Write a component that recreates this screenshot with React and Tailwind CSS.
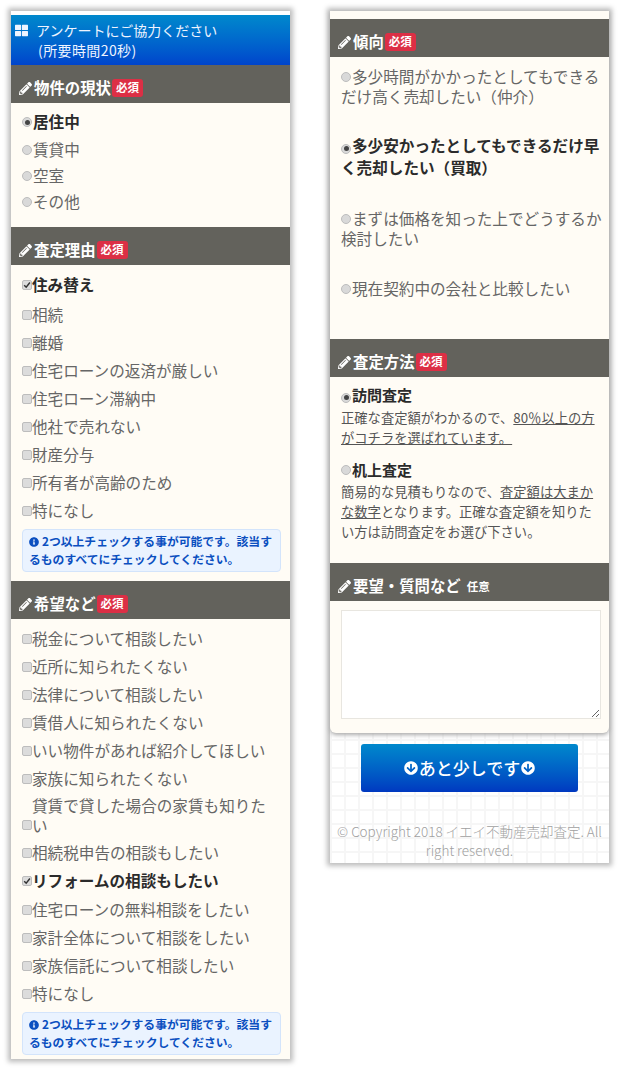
import { FaPencilAlt, FaInfoCircle, FaArrowCircleDown, FaThLarge } from 'react-icons/fa';

const Head = ({ title, badge = true }) => (
    <div className="h-[38px] bg-[#63625c] flex items-center pl-[8px] pt-[8px] text-white">
        <FaPencilAlt className="w-[13px] h-[13px] mr-[2px] shrink-0" />
        <span className="text-[15.4px] font-bold leading-none">{title}</span>
        {badge
            ? <span className="ml-[1px] h-[18px] px-[4px] flex items-center rounded-[3px] bg-[#dc2f45] text-[11.5px] font-bold leading-none">必須</span>
            : <span className="ml-[6px] text-[11.5px] font-bold leading-none mt-[2px]">任意</span>}
    </div>
);

const Radio = ({ on }) => (
    <span className="inline-flex align-[1px] w-[10px] h-[10px] mr-[1px] rounded-full bg-[#d9d9d9] border border-[#bdbdbd] items-center justify-center shrink-0">
        {on && <span className="w-[5px] h-[5px] rounded-full bg-[#444]" />}
    </span>
);

const Check = ({ on }) => (
    <span className="w-[10px] h-[10px] rounded-[2px] bg-[#dcdcdc] border border-[#bdbdbd] flex items-center justify-center shrink-0">
        {on && (
            <svg viewBox="0 0 10 10" className="w-[8px] h-[8px]">
                <path d="M1.5 5.2 4 7.8 8.6 1.8" fill="none" stroke="#333" strokeWidth="1.8" />
            </svg>
        )}
    </span>
);

const RadioRow = ({ label, on }) => (
    <div className={on ? 'h-[26px] mb-[2px] flex items-center text-[15.6px] font-bold text-[#2b2b2b]' : 'h-[26px] flex items-center text-[15.6px] text-[#666]'}>
        <Radio on={on} />
        <span>{label}</span>
    </div>
);

const Row = ({ label, on, tight }) => (
    <div className={on
        ? (tight ? 'h-[28px] mb-[1px] flex items-center text-[15.6px] font-bold text-[#2b2b2b]' : 'h-[28px] mb-[2px] flex items-center text-[15.6px] font-bold text-[#2b2b2b]')
        : 'h-[28px] flex items-center text-[15.6px] text-[#666]'}>
        <Check on={on} />
        <span>{label}</span>
    </div>
);

const Notice = () => (
    <div className="h-[43px] px-[6px] pt-[2px] rounded-[4px] bg-[#eaf3ff] border border-[#d3e4fb] text-[11.8px] leading-[18px] font-bold text-[#0b4fc0]">
        <FaInfoCircle className="inline w-[10px] h-[10px] mr-[3px] align-[-1px]" />
        2つ以上チェックする事が可能です。該当するものすべてにチェックしてください。
    </div>
);

const BigRadio = ({ on, label, className }) => (
    <p className={on ? `${className} text-[15.6px] leading-[22px] font-bold text-[#2b2b2b]` : `${className} text-[15.6px] leading-[20px] text-[#666]`}>
        <Radio on={on} />{label}
    </p>
);

const panel = 'w-[279px] bg-white shadow-[0_0_5px_3px_#bdbdbd]';

const App = () => {
    return (
        <div className="w-[620px] h-[1069px] bg-white flex gap-[40px] pl-[11px] pt-[11px] items-start font-['Noto_Sans_CJK_JP','Noto_Sans',sans-serif]">
            {/* left column */}
            <div className={`${panel} h-[1048px] pt-[4px]`}>
                <div className="h-[50px] bg-gradient-to-b from-[#0088cc] to-[#0044cc] text-[#eef4ff] flex text-[14px] leading-[20px] pt-[5px] pl-[4px]">
                    <FaThLarge className="w-[13px] h-[13px] mr-[8px] mt-[4px] shrink-0" />
                    <div>
                        アンケートにご協力ください<br />
                        <span className="ml-[2px] tracking-[0.4px]">(所要時間20秒)</span>
                    </div>
                </div>
                <Head title="物件の現状" />
                <div className="bg-[#fffcf5] pl-[11px] pr-[9px] pt-[6px] pb-[12px]">
                    <RadioRow on label="居住中" />
                    <RadioRow label="賃貸中" />
                    <RadioRow label="空室" />
                    <RadioRow label="その他" />
                </div>
                <Head title="査定理由" />
                <div className="bg-[#fffcf5] pl-[11px] pr-[9px] pt-[6px] pb-[9px]">
                    <Row on label="住み替え" />
                    <Row label="相続" />
                    <Row label="離婚" />
                    <Row label="住宅ローンの返済が厳しい" />
                    <Row label="住宅ローン滞納中" />
                    <Row label="他社で売れない" />
                    <Row label="財産分与" />
                    <Row label="所有者が高齢のため" />
                    <Row label="特になし" />
                    <div className="mt-[4px]"><Notice /></div>
                </div>
                <Head title="希望など" />
                <div className="bg-[#fffcf5] pl-[11px] pr-[9px] pt-[6px] pb-[4px]">
                    <Row label="税金について相談したい" />
                    <Row label="近所に知られたくない" />
                    <Row label="法律について相談したい" />
                    <Row label="賃借人に知られたくない" />
                    <Row label="いい物件があれば紹介してほしい" />
                    <Row label="家族に知られたくない" />
                    <div className="h-[46px] flex items-end pb-[4px] text-[15.6px] leading-[20px] text-[#666]">
                        <span className="mb-[5px]"><Check /></span>
                        <span className="w-[236px]">貸賃で貸した場合の家賃も知りたい</span>
                    </div>
                    <Row label="相続税申告の相談もしたい" />
                    <Row on tight label="リフォームの相談もしたい" />
                    <Row label="住宅ローンの無料相談をしたい" />
                    <Row label="家計全体について相談をしたい" />
                    <Row label="家族信託について相談したい" />
                    <Row label="特になし" />
                    <div className="mt-[4px]"><Notice /></div>
                </div>
            </div>

            {/* right column */}
            <div className={`${panel} h-[852px] flex flex-col bg-[linear-gradient(#f6f6f6_2px,transparent_2px),linear-gradient(90deg,#f6f6f6_2px,transparent_2px)] bg-[size:14px_14px]`}>
                <div className="bg-[#fffcf5] rounded-b-[6px] shadow-[0_2px_4px_#aaa] pt-[8px]">
                    <Head title="傾向" />
                    <div className="pl-[11px] pr-[6px] pt-[9px] pb-[41px]">
                        <BigRadio label="多少時間がかかったとしてもできるだけ高く売却したい（仲介）" className="mb-[28px]" />
                        <BigRadio on label="多少安かったとしてもできるだけ早く売却したい（買取）" className="mb-[30px]" />
                        <BigRadio label="まずは価格を知った上でどうするか検討したい" className="mb-[30px]" />
                        <BigRadio label="現在契約中の会社と比較したい" />
                    </div>
                    <Head title="査定方法" />
                    <div className="px-[11px] pt-[8px] pb-[21px]">
                        <p className="text-[15px] leading-[20px] font-bold text-[#2b2b2b]"><Radio on />訪問査定</p>
                        <p className="mt-[3px] text-[13.3px] leading-[20px] text-[#555]">
                            正確な査定額がわかるので、<span className="underline">80％以上の方がコチラを選ばれています。</span>
                        </p>
                        <p className="mt-[12px] text-[15px] leading-[20px] font-bold text-[#2b2b2b]"><Radio />机上査定</p>
                        <p className="mt-[2px] text-[13.3px] leading-[20px] text-[#555]">
                            簡易的な見積もりなので、<span className="underline">査定額は大まかな数字</span>となります。正確な査定額を知りたい方は訪問査定をお選び下さい。
                        </p>
                    </div>
                    <Head title="要望・質問など" badge={false} />
                    <div className="px-[11px] pt-[9px] pb-[14px]">
                        <textarea className="block w-[260px] h-[109px] bg-white border border-[#e8e6e0]" />
                    </div>
                </div>
                <button className="mx-auto mt-[11px] w-[217px] h-[48px] shrink-0 rounded-[3px] bg-gradient-to-b from-[#0088cc] to-[#0038c0] text-white text-[17px] font-medium flex items-center justify-center gap-[1px]">
                    <FaArrowCircleDown className="w-[14px] h-[14px]" />
                    あと少しです
                    <FaArrowCircleDown className="w-[14px] h-[14px]" />
                </button>
                <p className="mt-[30px] px-[6px] text-center text-[13.5px] leading-[19px] text-[#a0a0a0] font-light">
                    © Copyright 2018 イエイ不動産売却査定. All right reserved.
                </p>
            </div>
        </div>
    );
};

export default App;
